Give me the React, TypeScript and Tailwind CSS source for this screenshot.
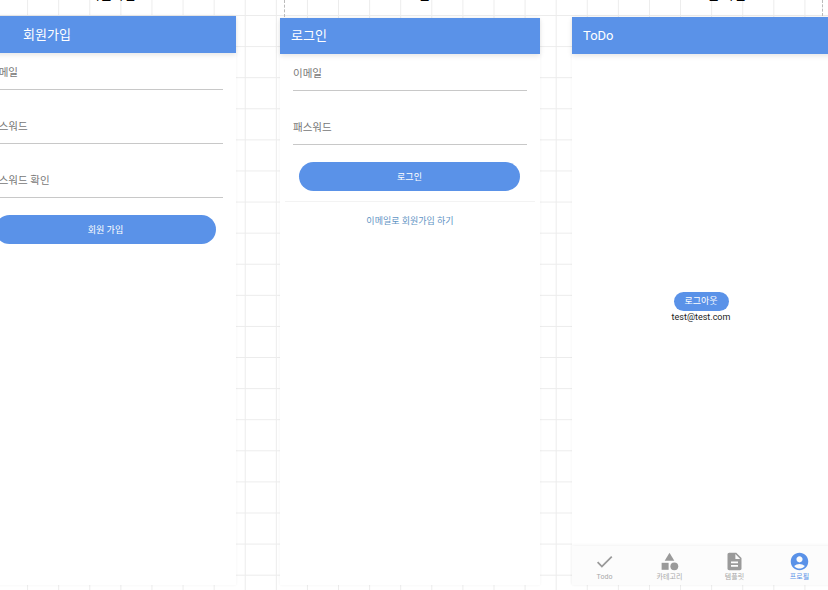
import { MdAccountCircle, MdCategory, MdCheck, MdDescription } from 'react-icons/md';

const font = "font-['Roboto','Noto_Sans_CJK_KR',sans-serif]";

function Header({ title, className }: { title: string; className: string }) {
  return (
    <div className={`bg-[#5a92e8] flex items-center text-[13px] text-white shadow-[0_2px_5px_rgba(0,0,0,0.1)] ${className}`}>
      {title}
    </div>
  );
}

function Field({ label, first }: { label: string; first?: boolean }) {
  return (
    <div className={`${first ? 'h-[37px]' : 'h-[54px]'} flex flex-col justify-end`}>
      <div className="h-[36px] border-b border-[#c8c8c8] text-[10.5px] leading-[38px] whitespace-nowrap text-[#777]">{label}</div>
    </div>
  );
}

function Tab({ label, active, children }: { label: string; active?: boolean; children: React.ReactNode }) {
  return (
    <div className={`flex-1 flex flex-col items-center pt-[5px] text-[7px] leading-[8px] ${active ? 'text-[#5a92e8]' : 'text-[#a8a8a8]'}`}>
      <div className={`text-[21px] leading-none h-[22px] ${active ? '' : 'text-[#9a9a9a]'}`}>{children}</div>
      <span>{label}</span>
    </div>
  );
}

export default function App() {
  return (
    <div
      className={`relative h-[590px] w-[828px] overflow-hidden bg-white bg-[linear-gradient(#ececec_1px,transparent_1px),linear-gradient(90deg,#ececec_1px,transparent_1px)] bg-[size:31.1px_31.1px] bg-[position:-4px_15px] ${font}`}
    >
      {/* artboard captions, almost entirely off the top edge */}
      <span className="absolute left-[88px] top-[-12px] text-[13px] leading-[14px] text-black">회원가입</span>
      <span className="absolute left-[394px] top-[-12px] text-[13px] leading-[14px] text-black">로그인</span>
      <span className="absolute left-[683px] top-[-12px] text-[13px] leading-[14px] text-black">프로필 화면</span>
      <span className="absolute left-[284px] top-0 h-[17px] border-l border-dashed border-[#bbb]" />
      <span className="absolute left-[822px] top-0 h-[16px] border-l border-dashed border-[#bbb]" />

      <div className="flex items-start ml-[-24px]">
        <section className="mt-[16px] h-[569px] w-[260px] shrink-0 bg-white shadow-[0_0_3px_rgba(0,0,0,0.05)]">
          <Header title="회원가입" className="h-[37px] pl-[47px]" />
          <div className="px-[13px]">
            <Field first label="이메일" />
            <Field label="패스워드" />
            <Field label="패스워드 확인" />
            <button className="mt-[17px] ml-[6px] block h-[29px] w-[221px] rounded-full bg-[#5a92e8] pt-[2px] text-[9px] text-white">
              회원 가입
            </button>
          </div>
        </section>

        <section className="ml-[44px] mt-[18px] h-[567px] w-[260px] shrink-0 bg-white shadow-[0_0_3px_rgba(0,0,0,0.05)]">
          <Header title="로그인" className="h-[36px] pl-[11px]" />
          <div className="px-[13px]">
            <Field first label="이메일" />
            <Field label="패스워드" />
            <button className="mt-[17px] ml-[6px] block h-[29px] w-[221px] rounded-full bg-[#5a92e8] pt-[2px] text-[9px] text-white">
              로그인
            </button>
          </div>
          <div className="mx-[5px] mt-[10px] border-t border-[#f3f3f3] pt-[13px] text-center text-[9px] leading-[13px] text-[#5f94c4]">
            이메일로 회원가입 하기
          </div>
        </section>

        <section className="ml-[32px] mt-[17px] flex h-[568px] w-[260px] shrink-0 flex-col bg-white shadow-[0_0_3px_rgba(0,0,0,0.05)]">
          <Header title="ToDo" className="h-[37px] pl-[11px]" />
          <div className="flex flex-1 flex-col items-center justify-center pr-[2px] pt-[14px]">
            <button className="h-[19px] w-[55px] rounded-full bg-[#5a92e8] pt-[1px] text-[9px] text-white">로그아웃</button>
            <span className="text-[9px] leading-[12px] text-[#222]">test@test.com</span>
          </div>
          <nav className="flex h-[39px] bg-[#fcfcfc] shadow-[0_-1px_3px_rgba(0,0,0,0.05)]">
            <Tab label="Todo"><MdCheck /></Tab>
            <Tab label="카테고리"><MdCategory /></Tab>
            <Tab label="템플릿"><MdDescription /></Tab>
            <Tab label="프로필" active><MdAccountCircle /></Tab>
          </nav>
        </section>
      </div>
    </div>
  );
}
